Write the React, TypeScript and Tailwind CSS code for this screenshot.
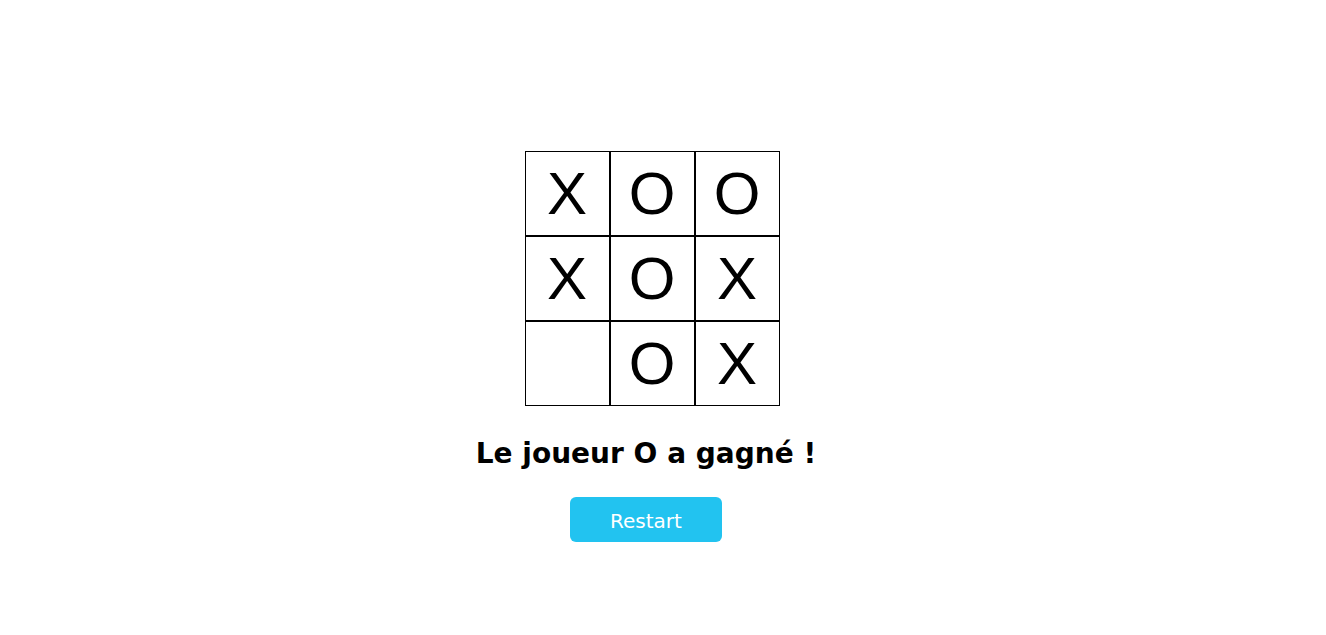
import { useState } from 'react';

type Cell = 'X' | 'O' | null;

const initial: Cell[] = ['X', 'O', 'O', 'X', 'O', 'X', null, 'O', 'X'];

export default function App() {
  const [board, setBoard] = useState<Cell[]>(initial);

  const restart = () => setBoard(Array(9).fill(null));

  return (
    <div className="min-h-[635px] w-full bg-white flex flex-col items-center pt-[151px] pr-[34px]">
      <div className="grid grid-cols-[repeat(3,85px)] ml-[12px]">
        {board.map((cell, i) => (
          <div
            key={i}
            className="w-[85px] h-[85px] border border-black flex items-center justify-center text-[60px] text-black font-['Liberation_Sans',Arial,sans-serif]"
          >
            {cell}
          </div>
        ))}
      </div>

      <h2 className="mt-[31px] leading-[34px] text-[28px] font-bold text-black font-['DejaVu_Sans',Verdana,sans-serif]">
        Le joueur O a gagné !
      </h2>

      <button
        onClick={restart}
        className="mt-[26px] w-[152px] h-[45px] pt-[2px] rounded-md bg-[#22c3f0] text-white text-[20px] font-['DejaVu_Sans',Verdana,sans-serif]"
      >
        Restart
      </button>
    </div>
  );
}
